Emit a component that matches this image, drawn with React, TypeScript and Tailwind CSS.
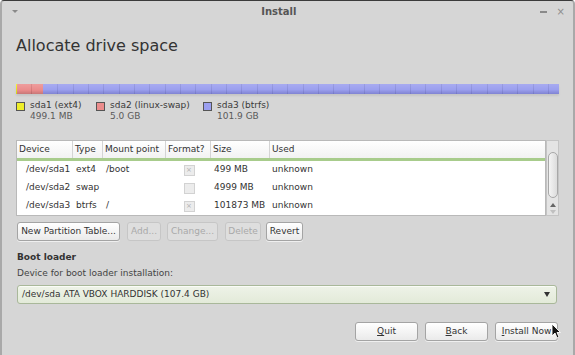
const font = { fontFamily: '"DejaVu Sans", "Liberation Sans", sans-serif' }

const rows = [
  { device: '/dev/sda1', type: 'ext4', mount: '/boot', format: true, size: '499 MB', used: 'unknown' },
  { device: '/dev/sda2', type: 'swap', mount: '', format: false, size: '4999 MB', used: 'unknown' },
  { device: '/dev/sda3', type: 'btrfs', mount: '/', format: true, size: '101873 MB', used: 'unknown' },
]

const legend = [
  { color: 'bg-[#eeee2a]', name: 'sda1 (ext4)', size: '499.1 MB', w: 'w-[80px]' },
  { color: 'bg-[#eb8c8c]', name: 'sda2 (linux-swap)', size: '5.0 GB', w: 'w-[107px]' },
  { color: 'bg-[#9b9ff0]', name: 'sda3 (btrfs)', size: '101.9 GB', w: 'w-[120px]' },
]

const Button = ({ label, disabled, className }: { label: React.ReactNode; disabled?: boolean; className?: string }) => (
  <div
    className={`h-[19px] flex items-center justify-center rounded-[3px] border text-[9px] ${
      disabled
        ? 'border-[#c6c6c6] bg-[#dedede] text-[#a9a9a9]'
        : 'border-[#a4a4a4] bg-[linear-gradient(#ffffff,#eaeaea)] text-[#333] shadow-[0_1px_0_rgba(255,255,255,0.6)]'
    } ${className ?? ''}`}
  >
    {label}
  </div>
)

const Check = ({ on }: { on: boolean }) => (
  <div className="w-[11px] h-[11px] border border-[#d2d2d2] bg-[#ececec] flex items-center justify-center text-[7px] leading-none text-[#b0b0b0]">
    {on ? '×' : ''}
  </div>
)

export default function App() {
  return (
    <div style={font} className="relative w-[575px] h-[355px] overflow-hidden bg-[#d6d6d6] text-[#3a3a3a] border-t border-[#3b3b3b] border-x-2 border-x-[#a9a9a9] rounded-t-[4px]">
      {/* title bar */}
      <div className="h-[21px] flex items-center pl-[10px] pr-[8px] text-[#8a8a8a]">
        <div className="w-0 h-0 border-x-[3px] border-x-transparent border-t-[3px] border-t-[#8a8a8a]" />
        <div className="flex-1 text-center text-[10px] font-bold text-[#555]">Install</div>
        <div className="w-[7px] h-[2px] bg-[#8a8a8a] mr-[10px]" />
        <div className="text-[10px] leading-none text-[#8e8e8e]">×</div>
      </div>

      <div className="px-[14px]">
        <h1 className="mt-[14px] text-[16px] leading-[20px] text-[#333]">Allocate drive space</h1>

        {/* partition bar */}
        <div className="mt-[28px] h-[10px] flex rounded-[1px] shadow-[0_2px_2px_rgba(0,0,0,0.08)]">
          <div className="w-[1px] bg-[linear-gradient(#f4f43a,#d4d41a)]" />
          <div className="w-[26px] bg-[linear-gradient(to_bottom,rgba(255,255,255,0.15),rgba(0,0,0,0)_60%,rgba(0,0,0,0.15)),repeating-linear-gradient(90deg,#eb8c8c_0,#eb8c8c_14px,#d47a7a_14px,#d47a7a_15px)]" />
          <div className="flex-1 bg-[linear-gradient(to_bottom,rgba(255,255,255,0.12),rgba(0,0,0,0)_55%,rgba(0,0,80,0.18)),repeating-linear-gradient(90deg,#9ca0ef_0,#9ca0ef_14.3px,#8c90dc_14.3px,#8c90dc_15.33px)]" />
        </div>

        {/* legend */}
        <div className="mt-[6px] flex text-[9px] leading-[11px]">
          {legend.map((l) => (
            <div key={l.name} className={`flex ${l.w}`}>
              <div className={`mt-[2px] w-[9px] h-[9px] border border-[#555] ${l.color}`} />
              <div className="ml-[5px]">
                <div className="text-[#3a3a3a]">{l.name}</div>
                <div className="text-[#5a5a5a]">{l.size}</div>
              </div>
            </div>
          ))}
        </div>

        {/* partition table */}
        <div className="mt-[18px] flex">
          <div className="w-[530px] border border-[#b9b9b9] bg-white text-[9px]">
            <div className="grid grid-cols-[56px_30px_63px_45px_59px_1fr] h-[20px] bg-[linear-gradient(#ffffff,#f2f2f2)] border-b-[3px] border-[#a8cc8c] text-[#333]">
              {['Device', 'Type', 'Mount point', 'Format?', 'Size', 'Used'].map((h, i) => (
                <div key={h} className={`flex items-center px-[2px] ${i < 5 ? 'border-r border-[#d4d4d4]' : ''}`}>
                  {h}
                </div>
              ))}
            </div>
            {rows.map((r) => (
              <div key={r.device} className="grid grid-cols-[56px_30px_63px_45px_59px_1fr] h-[18px] items-center text-[#333]">
                <div className="pl-[9px]">{r.device}</div>
                <div className="pl-[3px]">{r.type}</div>
                <div className="pl-[3px]">{r.mount}</div>
                <div className="flex justify-center pl-[1px]">
                  <Check on={r.format} />
                </div>
                <div className="pl-[3px]">{r.size}</div>
                <div className="pl-[2px]">{r.used}</div>
              </div>
            ))}
          </div>
          <div className="w-[13px] border border-[#c4c4c4] bg-[#e4e4e4] flex flex-col items-center">
            <div className="mt-[11px] w-[10px] h-[46px] rounded-[5px] border border-[#a8a8a8] bg-[linear-gradient(90deg,#f4f4f4,#dcdcdc)]" />
            <div className="mt-[5px] w-0 h-0 border-x-[3px] border-x-transparent border-b-[4px] border-b-[#666]" />
            <div className="mt-[3px] w-0 h-0 border-x-[3px] border-x-transparent border-t-[4px] border-t-[#c0c0c0]" />
          </div>
        </div>

        {/* table buttons */}
        <div className="mt-[6px] flex gap-[6px]">
          <Button label="New Partition Table..." className="w-[103px] ml-[1px]" />
          <Button label="Add..." disabled className="w-[34px] ml-[1px]" />
          <Button label="Change..." disabled className="w-[51px]" />
          <Button label="Delete" disabled className="w-[36px] ml-[1px]" />
          <Button label="Revert" className="w-[37px] -ml-[1px]" />
        </div>

        {/* boot loader */}
        <div className="mt-[10px] text-[9px] leading-[12px] font-bold text-[#333] ml-[1px]">Boot loader</div>
        <div className="mt-[4px] text-[9px] leading-[12px] text-[#444] ml-[1px]">Device for boot loader installation:</div>
        <div className="mt-[6px] ml-[1px] mr-[2px] h-[19px] flex items-center justify-between px-[4px] rounded-[3px] border border-[#a9b89a] bg-[linear-gradient(#eef3e8,#e3ead9)] shadow-[inset_0_1px_0_#fafcf7] text-[9px] text-[#333]">
          <span>/dev/sda ATA VBOX HARDDISK (107.4 GB)</span>
          <div className="mr-[2px] w-0 h-0 border-x-[3.5px] border-x-transparent border-t-[5px] border-t-[#333]" />
        </div>

        {/* bottom buttons */}
        <div className="mt-[18px] flex justify-end gap-[7px] mr-[1px]">
          <Button label={<span><u>Q</u>uit</span>} className="w-[63px]" />
          <Button label={<span><u>B</u>ack</span>} className="w-[63px]" />
          <Button label={<span><u>I</u>nstall Now</span>} className="w-[63px]" />
        </div>
      </div>

      {/* mouse pointer */}
      <svg className="absolute left-[549px] top-[322px]" width="10" height="16" viewBox="0 0 10 16">
        <path d="M1 1 L1 13 L4 10 L6 15 L8 14 L6 9.5 L9.5 9.5 Z" fill="#111" stroke="#fff" strokeWidth="0.9" />
      </svg>
    </div>
  )
}
